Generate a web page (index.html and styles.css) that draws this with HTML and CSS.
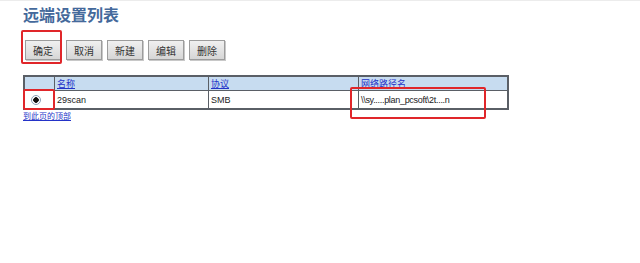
FILE: index.html
```html
<!DOCTYPE html>
<html lang="zh-CN">
<head>
  <meta charset="UTF-8" />
  <title>远端设置列表</title>
  <link rel="stylesheet" href="styles.css">
</head>
<body>
  <div class="page">
    <h1>远端设置列表</h1>

    <div class="toolbar">
      <button class="btn">确定</button>
      <button class="btn">取消</button>
      <button class="btn">新建</button>
      <button class="btn">编辑</button>
      <button class="btn">删除</button>
    </div>

    <table class="list">
      <tr class="head">
        <th class="sel"></th>
        <th class="name"><a href="#">名称</a></th>
        <th class="proto"><a href="#">协议</a></th>
        <th><a href="#">网络路径名</a></th>
      </tr>
      <tr>
        <td class="sel"><span class="radio"></span></td>
        <td>29scan</td>
        <td>SMB</td>
        <td class="path">\\sy.....plan_pcsoft\2t....n</td>
      </tr>
    </table>
    <a class="top-link" href="#">到此页的顶部</a>

    <!-- red marks drawn over the screenshot -->
    <div class="mark mark-ok"></div>
    <div class="mark mark-radio"></div>
    <div class="mark mark-path"></div>
  </div>
</body>
</html>
```

FILE: styles.css
```css
html, body {
  margin: 0;
  padding: 0;
  background: #fff;
  font-family: "Liberation Sans", "Noto Sans CJK SC", sans-serif;
}

.page {
  position: relative;
  padding: 5px 0 0 23px;
  height: 258px;
  border-top: 1px solid #ececec;
  box-sizing: border-box;
}

h1 {
  margin: 0;
  font-size: 16px;
  line-height: 20px;
  font-weight: bold;
  color: #44699b;
}

.toolbar {
  display: flex;
  gap: 5px;
  margin: 14px 0 0 2px;
}

.btn {
  width: 36px;
  height: 20px;
  padding: 0;
  font-family: "Noto Sans CJK SC", sans-serif;
  font-size: 10px;
  color: #333;
  background: linear-gradient(#f0f0f0, #d6d6d6);
  border: 1px solid #9c9c9c;
  box-shadow: 1px 1px 0 #c8c8c8;
}

.list {
  margin-top: 15px;
  width: 486px;
  border-collapse: collapse;
  border: 2px solid #5a5f66;
  font-size: 9px;
}

.list th,
.list td {
  border: 1px solid #5a5f66;
  padding: 0 2px;
  text-align: left;
}

.list .head {
  background: #c7dcf0;
  height: 14px;
}

.list th {
  font-weight: normal;
  font-family: "Noto Sans CJK SC", sans-serif;
  line-height: 13px;
}

.list th a {
  color: #2433c8;
}

.list td {
  height: 17px;
  color: #222;
}

.list .sel {
  width: 25px;
}

.list .name {
  width: 149px;
}

.list .proto {
  width: 145px;
}

.path {
  color: #666;
  letter-spacing: -0.3px;
}

.radio {
  display: block;
  margin-left: 4px;
  width: 8px;
  height: 8px;
  border: 1px solid #8aa0b8;
  border-radius: 50%;
  background: radial-gradient(circle, #111 0 2.5px, #fff 3px);
}

.top-link {
  display: block;
  width: fit-content;
  margin-top: 1px;
  font-family: "Noto Sans CJK SC", sans-serif;
  font-size: 8px;
  line-height: 10px;
  color: #2433c8;
}

.mark {
  position: absolute;
  border: 2px solid #e0262a;
  border-radius: 2px;
}

.mark-ok {
  left: 21px;
  top: 29px;
  width: 37px;
  height: 30px;
}

.mark-radio {
  left: 23px;
  top: 88px;
  width: 28px;
  height: 17px;
}

.mark-path {
  left: 350px;
  top: 86px;
  width: 132px;
  height: 28px;
}
```
